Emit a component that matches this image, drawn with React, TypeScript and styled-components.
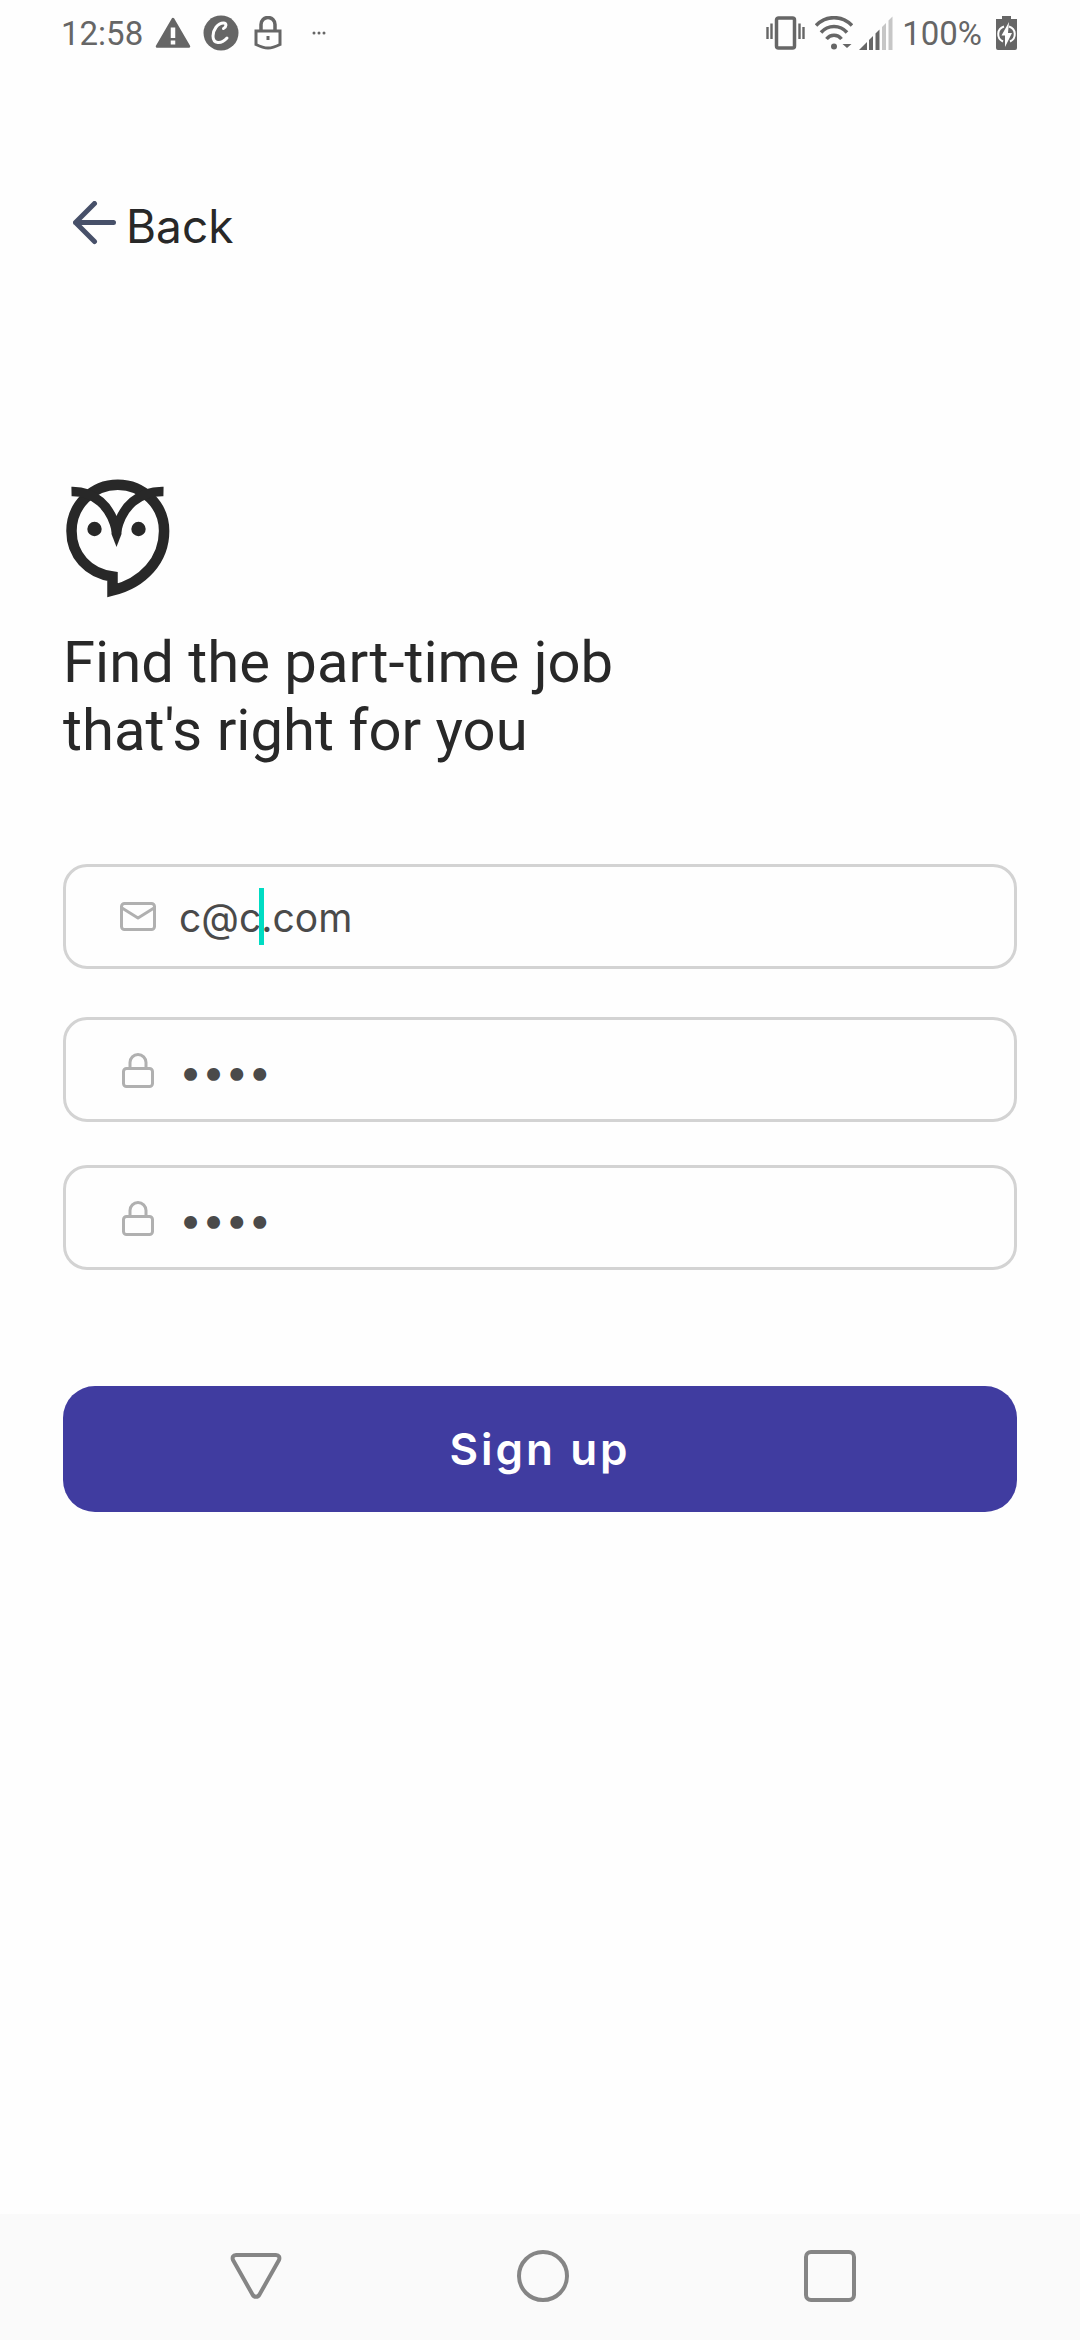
import React, { useState } from "react";
import styled, { createGlobalStyle } from "styled-components";

const color = {
  ink: "#282828",
  status: "#666666",
  input: "#4a4a4a",
  line: "#d3d3d3",
  icon: "#b0b0b0",
  primary: "#403ca0",
  caret: "#00dcc3",
};

const GlobalStyle = createGlobalStyle`
  *, *::before, *::after { box-sizing: border-box; }
  body { margin: 0; background: #fefefe; }
  h1, p { margin: 0; }
  svg { display: block; flex: none; }
`;

const Screen = styled.div`
  display: flex;
  flex-direction: column;
  min-height: 100vh;
  font-family: Inter, Roboto, sans-serif;
  color: ${color.ink};
`;

const StatusBar = styled.header`
  display: flex;
  align-items: center;
  justify-content: space-between;
  height: 66px;
  padding: 0 63px 0 61px;
  font-family: Roboto, sans-serif;
  font-size: 33px;
  color: ${color.status};
`;

const StatusGroup = styled.div<{ $gap: number }>`
  display: flex;
  align-items: center;
  gap: ${(p) => p.$gap}px;
`;

const More = styled.span`
  display: flex;
  margin-left: 18px;
`;

const Content = styled.main`
  flex: 1;
  padding: 0 63px;
`;

const BackLink = styled.a`
  display: inline-flex;
  align-items: center;
  gap: 10px;
  margin-top: 128px;
  padding-left: 10px;
  font-size: 46px;
  line-height: 64px;
  color: inherit;
  text-decoration: none;
`;

const Brand = styled.div`
  padding: 221px 0 0 3px;
`;

const Title = styled.h1`
  margin-top: 30px;
  font: 400 58px/68px Roboto, sans-serif;
`;

const Form = styled.form`
  display: flex;
  flex-direction: column;
  padding-top: 100px;
`;

const Field = styled.label<{ $gap: number }>`
  position: relative;
  display: flex;
  align-items: center;
  gap: 20px;
  height: 105px;
  margin-bottom: ${(p) => p.$gap}px;
  padding: 0 51px;
  border: 3px solid ${color.line};
  border-radius: 24px;
`;

const Input = styled.input<{ $size: number }>`
  flex: 1;
  min-width: 0;
  padding: 3px 0 0;
  border: 0;
  outline: 0;
  background: transparent;
  font: 400 ${(p) => p.$size}px/56px Inter, Roboto, sans-serif;
  color: ${color.input};
`;

const Caret = styled.span`
  position: absolute;
  left: 193px;
  top: 21px;
  width: 5px;
  height: 57px;
  background: ${color.caret};
`;

const Submit = styled.button`
  height: 126px;
  margin-top: 116px;
  padding: 0;
  border: 0;
  border-radius: 32px;
  background: ${color.primary};
  font: 600 44px/60px Inter, Roboto, sans-serif;
  letter-spacing: 3px;
  color: #ffffff;
`;

const NavBar = styled.nav`
  display: grid;
  grid-template-columns: repeat(3, 1fr);
  height: 126px;
  padding: 0 106px 0 112px;
  background: #fafafa;
`;

const NavButton = styled.button`
  display: flex;
  align-items: center;
  justify-content: center;
  padding: 0 0 2px;
  border: 0;
  background: transparent;
  color: #858585;
`;

const WarningIcon = () => (
  <svg width="36" height="32" viewBox="0 0 36 32" aria-hidden="true">
    <path d="M18 2 34 29.500H2Z" fill="currentColor" stroke="currentColor" strokeWidth="2.500" strokeLinejoin="round" />
    <path d="M18 10.500V21M18 23.500v4" stroke="#fefefe" strokeWidth="4.500" />
  </svg>
);

const AppIcon = () => (
  <svg width="36" height="36" viewBox="0 0 36 36" aria-hidden="true">
    <circle cx="18" cy="18" r="17.500" fill="currentColor" />
    <path
      d="M20.500 13.500c3-1.500 3.500-5.500 0-5.500C14.500 8 10 15 10 21c0 8 8 8.500 14 2"
      fill="none"
      stroke="#fefefe"
      strokeWidth="3"
      strokeLinecap="round"
    />
  </svg>
);

const StatusLockIcon = () => (
  <svg width="31" height="34" viewBox="-3 0 31 34" fill="none" stroke="currentColor" aria-hidden="true">
    <path d="M7 14V8.500a7 7 0 0 1 14 0V14" strokeWidth="3.500" />
    <path d="M2 15h24v13.500c-4 2-8 3.500-12 3.500S6 30.500 2 28.500Z" strokeWidth="3" />
    <path d="M14 20v4" strokeWidth="3" />
  </svg>
);

const MoreIcon = () => (
  <svg width="14" height="4" viewBox="0 0 14 4" fill="currentColor" aria-hidden="true">
    <circle cx="2" cy="2" r="1.500" />
    <circle cx="7" cy="2" r="1.500" />
    <circle cx="12" cy="2" r="1.500" />
  </svg>
);

const VibrateIcon = () => (
  <svg width="40" height="34" viewBox="0 0 40 34" fill="none" stroke="currentColor" aria-hidden="true">
    <rect x="10.500" y="2" width="18" height="30" rx="2" strokeWidth="3.500" />
    <path d="M1.500 11v12M5.500 7.500v15.500M33.500 7.500v15.500M37.500 11v12" strokeWidth="2.400" />
  </svg>
);

const WifiIcon = () => (
  <svg width="38" height="34" viewBox="0 0 38 34" fill="none" stroke="currentColor" strokeWidth="3.500" aria-hidden="true">
    <path d="M1 9.500C11-1 27-1 37 9.500M6 16.500c7-8 19-8 26 0M11.500 23c4-5 11-5 15 0" />
    <circle cx="19" cy="30.500" r="3" fill="currentColor" stroke="none" />
    <path d="M27.500 28h9l-4.500 4Z" fill="currentColor" stroke="none" />
  </svg>
);

const SignalIcon = () => (
  <svg width="34" height="34" viewBox="0 0 34 34" fill="currentColor" aria-hidden="true">
    <path d="M0 34 8 26v8ZM10 24l4-4v14h-4ZM16.500 17.500l4-4V34h-4Z" />
    <path d="M23 11l4-4v27h-4ZM29.500 4.500l4-4V34h-4Z" fill="#c6c6c6" />
  </svg>
);

const BatteryIcon = () => (
  <svg width="26" height="34" viewBox="-5 0 26 34" aria-hidden="true">
    <path d="M6 0h9v3h6v29a2 2 0 0 1-2 2H2a2 2 0 0 1-2-2V3h6Z" fill="currentColor" />
    <path d="M8 10.500a8 8 0 0 0-1 15M13 10.500a8 8 0 0 1 1 15" fill="none" stroke="#fefefe" strokeWidth="2" />
    <path d="M13 6 5.500 19.500H9V31l7-14h-4Z" fill="#fefefe" />
  </svg>
);

const ArrowIcon = () => (
  <svg width="43" height="50" viewBox="0 0 43 50" fill="none" stroke="#475069" strokeWidth="5" strokeLinecap="round" strokeLinejoin="round" aria-hidden="true">
    <path d="M40.500 21.500h-38l19-19M2.500 21.500l19 19" />
  </svg>
);

const OwlLogo = () => (
  <svg width="104" height="119" viewBox="0 0 104 119" fill="none" stroke={color.ink} role="img" aria-label="Owl">
    <path d="M46.500 97.500C22 94 5.500 76 5.500 52a46.300 46.300 0 0 1 92.600 0c0 29-21 52-51.600 59.500Z" strokeWidth="10.500" />
    <path d="M5.500 12.500C28 12 45 27 50.500 52 56 27 73 12 97.500 12.500" strokeWidth="9.500" />
    <path d="M45.500 45h10v10l-5 13-5-13Z" fill={color.ink} stroke="none" />
    <circle cx="28.500" cy="50" r="7.200" fill={color.ink} stroke="none" />
    <circle cx="72.500" cy="50" r="7.200" fill={color.ink} stroke="none" />
  </svg>
);

const MailIcon = () => (
  <svg width="42" height="42" viewBox="0 0 42 42" fill="none" stroke={color.icon} strokeWidth="3" strokeLinejoin="round" aria-hidden="true">
    <rect x="4.500" y="7.500" width="33" height="26" rx="3" />
    <path d="M5 12 21 22l16-10" />
  </svg>
);

const LockIcon = () => (
  <svg width="42" height="42" viewBox="0 0 42 42" fill="none" stroke={color.icon} strokeWidth="3" aria-hidden="true">
    <rect x="6.500" y="19.500" width="29" height="18" rx="3" />
    <path d="M13 19.500v-6a8 8 0 0 1 16 0v6" />
  </svg>
);

export default function App() {
  const [email, setEmail] = useState("c@c.com");
  const [password, setPassword] = useState("1234");
  const [repeat, setRepeat] = useState("1234");

  return (
    <Screen>
      <GlobalStyle />
      <StatusBar>
        <StatusGroup $gap={12}>
          <span>12:58</span>
          <WarningIcon />
          <AppIcon />
          <StatusLockIcon />
          <More><MoreIcon /></More>
        </StatusGroup>
        <StatusGroup $gap={9}>
          <VibrateIcon />
          <StatusGroup $gap={6}>
            <WifiIcon />
            <SignalIcon />
          </StatusGroup>
          <span>100%</span>
          <BatteryIcon />
        </StatusGroup>
      </StatusBar>
      <Content>
        <BackLink href="#back">
          <ArrowIcon />
          <span>Back</span>
        </BackLink>
        <Brand>
          <OwlLogo />
        </Brand>
        <Title>
          Find the part-time job
          <br />
          that's right for you
        </Title>
        <Form onSubmit={(e) => e.preventDefault()}>
          <Field $gap={48}>
            <MailIcon />
            <Input $size={39} type="email" aria-label="Email" value={email} onChange={(e) => setEmail(e.target.value)} />
            <Caret />
          </Field>
          <Field $gap={43}>
            <LockIcon />
            <Input $size={41} type="password" aria-label="Password" value={password} onChange={(e) => setPassword(e.target.value)} />
          </Field>
          <Field $gap={0}>
            <LockIcon />
            <Input $size={41} type="password" aria-label="Repeat password" value={repeat} onChange={(e) => setRepeat(e.target.value)} />
          </Field>
          <Submit type="submit">Sign up</Submit>
        </Form>
      </Content>
      <NavBar aria-label="System">
        <NavButton aria-label="Back">
          <svg width="54" height="54" viewBox="0 0 54 54" fill="none" stroke="currentColor" strokeWidth="4" strokeLinejoin="round" aria-hidden="true">
            <path d="M7 6h40c3 0 4 2.500 3 5L30.500 45.500c-1.500 3-5.500 3-7 0L4 11c-1-2.500 0-5 3-5Z" />
          </svg>
        </NavButton>
        <NavButton aria-label="Home">
          <svg width="54" height="54" viewBox="0 0 54 54" fill="none" stroke="currentColor" strokeWidth="4" aria-hidden="true">
            <circle cx="27" cy="27" r="24" />
          </svg>
        </NavButton>
        <NavButton aria-label="Recent apps">
          <svg width="54" height="54" viewBox="0 0 54 54" fill="none" stroke="currentColor" strokeWidth="4" aria-hidden="true">
            <rect x="3" y="3" width="48" height="48" rx="5" />
          </svg>
        </NavButton>
      </NavBar>
    </Screen>
  );
}
